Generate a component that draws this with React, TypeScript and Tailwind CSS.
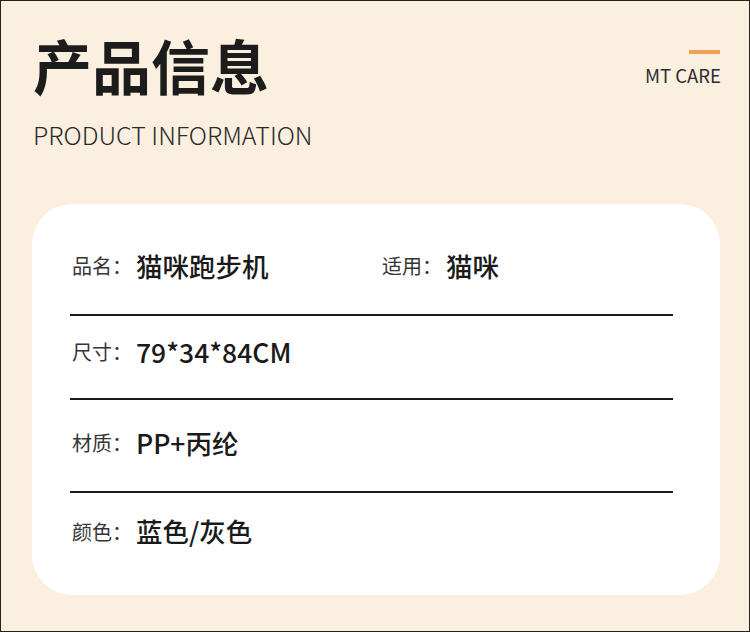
import React from 'react';

const font = { fontFamily: '"Noto Sans CJK SC", "Noto Sans", sans-serif' };

const rows = [
  { label: '品名：', value: '猫咪跑步机', extra: { label: '适用：', value: '猫咪' }, cls: 'h-[110px] pt-[14px]' },
  { label: '尺寸：', value: '79*34*84CM', cls: 'h-[82px] pb-[10px]' },
  { label: '材质：', value: 'PP+丙纶', cls: 'h-[91px] pb-[5px]' },
  { label: '颜色：', value: '蓝色/灰色', cls: 'h-[102px] pb-[25px]' },
];

const Field = ({ label, value }: { label: string; value: string }) => (
  <div className="flex items-center">
    <span className="text-[20px] text-[#363636] leading-none">{label}</span>
    <span className="ml-[4px] text-[26.5px] font-medium text-[#1a1a1a] leading-none">{value}</span>
  </div>
);

export default function App() {
  return (
    <div
      className="w-[750px] h-[632px] bg-[#fbefe0] border border-[#222] overflow-hidden flex flex-col"
      style={font}
    >
      {/* 标题 */}
      <div className="flex justify-between pl-[32px] pr-[28px] pt-[34px] h-[203px]">
        <div>
          <h1 className="text-[59px] font-bold text-[#1c1c1c] leading-none">产品信息</h1>
          <p className="mt-[28px] text-[25px] font-light text-[#2a2a2a] leading-none">PRODUCT INFORMATION</p>
        </div>
        <div className="flex flex-col items-end pt-[15px]">
          <div className="w-[31px] h-[4px] bg-[#f0a256] mr-[1px]" />
          <span className="mt-[12px] text-[18.5px] text-[#2d2d2d] leading-none">MT CARE</span>
        </div>
      </div>

      {/* 信息卡片 */}
      <div className="ml-[31px] w-[688px] h-[391px] bg-white rounded-[40px] pl-[38px] pr-[47px]">
        {rows.map((r, i) => (
          <div key={r.label}>
            <div className={`flex items-center ${r.cls}`}>
              <div className="w-[312px] pl-[2px]">
                <Field label={r.label} value={r.value} />
              </div>
              {r.extra && <Field label={r.extra.label} value={r.extra.value} />}
            </div>
            {i < rows.length - 1 && <div className="h-[2px] bg-[#1a1a1a]" />}
          </div>
        ))}
      </div>
    </div>
  );
}
